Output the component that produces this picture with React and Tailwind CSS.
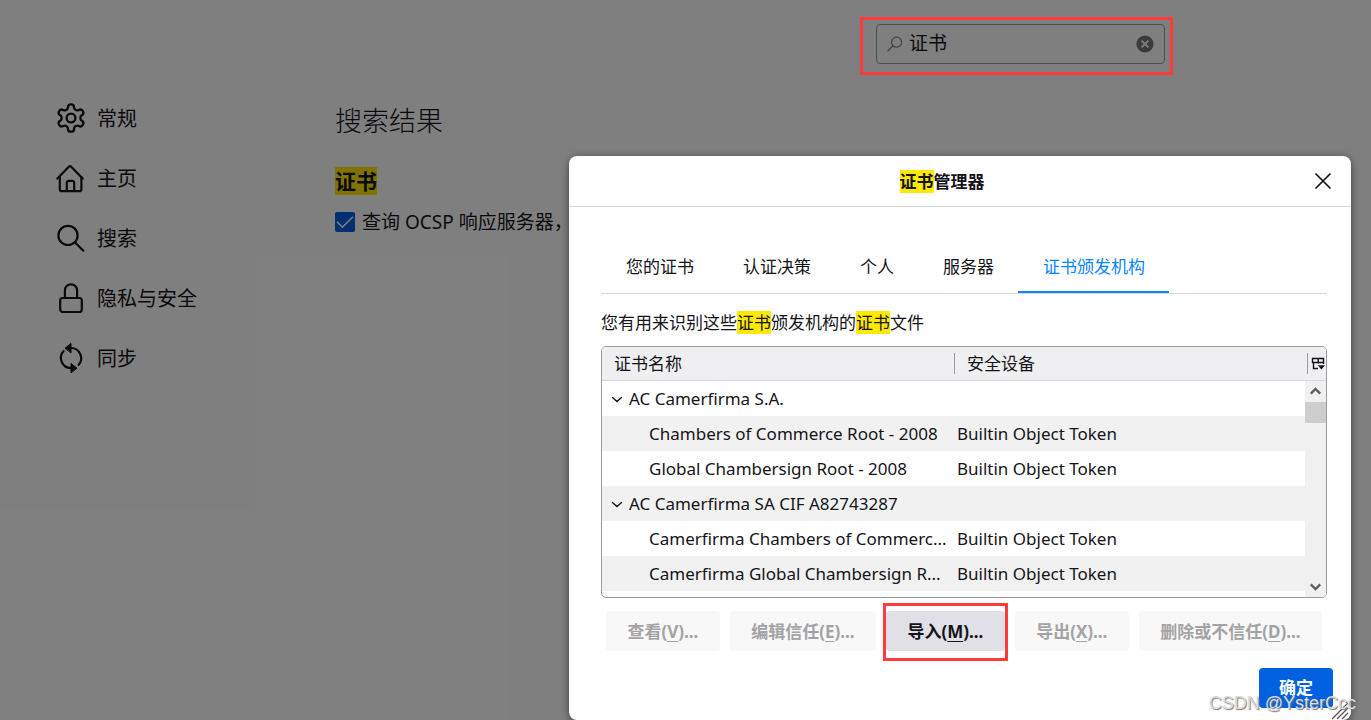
import React from "react";

const GearIcon = () => (
  <svg viewBox="1 1 22 22" className="size-[30px]" fill="none" stroke="currentColor" strokeWidth="1.7" strokeLinejoin="round">
    <path d="M12.22 2h-.44a2 2 0 0 0-2 2v.18a2 2 0 0 1-1 1.73l-.43.25a2 2 0 0 1-2 0l-.15-.08a2 2 0 0 0-2.73.73l-.22.38a2 2 0 0 0 .73 2.73l.15.1a2 2 0 0 1 1 1.72v.51a2 2 0 0 1-1 1.74l-.15.09a2 2 0 0 0-.73 2.73l.22.38a2 2 0 0 0 2.73.73l.15-.08a2 2 0 0 1 2 0l.43.25a2 2 0 0 1 1 1.73V20a2 2 0 0 0 2 2h.44a2 2 0 0 0 2-2v-.18a2 2 0 0 1 1-1.73l.43-.25a2 2 0 0 1 2 0l.15.08a2 2 0 0 0 2.73-.73l.22-.39a2 2 0 0 0-.73-2.73l-.15-.08a2 2 0 0 1-1-1.74v-.5a2 2 0 0 1 1-1.74l.15-.09a2 2 0 0 0 .73-2.73l-.22-.38a2 2 0 0 0-2.73-.73l-.15.08a2 2 0 0 1-2 0l-.43-.25a2 2 0 0 1-1-1.73V4a2 2 0 0 0-2-2z" />
    <circle cx="12" cy="12" r="3.2" />
  </svg>
);

const HomeIcon = () => (
  <svg viewBox="0 0 30 30" className="size-[30px]" fill="none" stroke="currentColor" strokeWidth="2.2" strokeLinecap="round" strokeLinejoin="round">
    <path d="M1.4 15.6 12.8 3.7a1.7 1.7 0 0 1 2.4 0l11.4 11.9" />
    <path d="M3.8 14v12.2a2 2 0 0 0 2 2h17.6a2 2 0 0 0 2-2V14" />
    <path d="M10.8 28v-8.2a2 2 0 0 1 2-2h3.4a2 2 0 0 1 2 2V28" />
  </svg>
);

const SearchIcon = () => (
  <svg viewBox="0 0 30 30" className="size-[30px]" fill="none" stroke="currentColor" strokeWidth="2.2" strokeLinecap="round">
    <circle cx="12" cy="12.4" r="9.6" />
    <path d="m18.9 19.3 8.4 8.4" />
  </svg>
);

const LockIcon = () => (
  <svg viewBox="0 0 30 30" className="size-[30px]" fill="none" stroke="currentColor" strokeWidth="2.2">
    <rect x="4.2" y="15" width="21.6" height="14" rx="2.4" />
    <path d="M8.9 15V7.4a6.1 6.1 0 0 1 12.2 0V15" />
  </svg>
);

const SyncIcon = () => (
  <svg viewBox="0 0 30 30" className="size-[30px]" fill="none" stroke="currentColor" strokeWidth="2.2" strokeLinecap="round">
    <path d="M15 5a10.2 10.2 0 0 1 7.6 16.9" />
    <path d="M15 25.2A10.2 10.2 0 0 1 7.6 8.1" />
    <path d="M9.3 5 15 .4v9.2zM20.7 25 15 20.4v9.2z" fill="currentColor" strokeWidth="1" strokeLinejoin="round" />
  </svg>
);

const categories = [
  { label: "常规", Icon: GearIcon },
  { label: "主页", Icon: HomeIcon },
  { label: "搜索", Icon: SearchIcon },
  { label: "隐私与安全", Icon: LockIcon },
  { label: "同步", Icon: SyncIcon },
];

const tabs = ["您的证书", "认证决策", "个人", "服务器", "证书颁发机构"];

const rows = [
  { group: true, name: "AC Camerfirma S.A." },
  { name: "Chambers of Commerce Root - 2008", device: "Builtin Object Token" },
  { name: "Global Chambersign Root - 2008", device: "Builtin Object Token" },
  { group: true, name: "AC Camerfirma SA CIF A82743287" },
  { name: "Camerfirma Chambers of Commerc...", device: "Builtin Object Token" },
  { name: "Camerfirma Global Chambersign R...", device: "Builtin Object Token" },
];

const actions = [
  { label: "查看", accessKey: "V" },
  { label: "编辑信任", accessKey: "E" },
  { label: "导入", accessKey: "M", enabled: true },
  { label: "导出", accessKey: "X" },
  { label: "删除或不信任", accessKey: "D" },
];

function Mark({ children }) {
  return <mark className="bg-[#ffe900] text-inherit">{children}</mark>;
}

function Settings() {
  return (
    <div>
      <header className="flex justify-end py-6 pr-[206px]">
        <div className="relative flex h-10 w-[289px] items-center rounded border border-[#9a9aa0] px-2.5">
          <svg viewBox="0 0 16 16" className="size-4 shrink-0 text-[#8a8a90]" fill="none" stroke="currentColor" strokeWidth="1.3" strokeLinecap="round">
            <circle cx="9.6" cy="6.2" r="5" />
            <path d="M6 9.8 1 14.8" />
          </svg>
          <input
            type="text"
            aria-label="搜索设置"
            defaultValue="证书"
            className="ml-1.5 min-w-0 flex-1 bg-transparent pb-0.5 text-[19px] leading-6 outline-none"
          />
          <button type="button" aria-label="清除" className="shrink-0">
            <svg viewBox="0 0 18 18" className="size-[18px]">
              <circle cx="9" cy="9" r="8.6" fill="#77777b" />
              <path d="m5.6 5.6 6.8 6.8m0-6.8-6.8 6.8" stroke="#fff" strokeWidth="1.8" />
            </svg>
          </button>
          <span className="pointer-events-none absolute -top-2 -right-[9px] -bottom-3 -left-[17px] z-20 border-3 border-[#ff3b3b]" />
        </div>
      </header>
      <div className="flex">
        <nav className="w-[335px] shrink-0 pl-14">
          {categories.map(({ label, Icon }) => (
            <a key={label} href="#" className="flex h-[60px] items-center gap-[11px] text-[20px]">
              <Icon />
              <span className="pt-0.5">{label}</span>
            </a>
          ))}
        </nav>
        <main className="min-w-0 flex-1 pt-[13px]">
          <h1 className="text-[27px] leading-10 font-light">搜索结果</h1>
          <h2 className="mt-[26px] text-[21px] leading-7 font-bold">
            <Mark>证书</Mark>
          </h2>
          <label className="mt-[13px] flex items-center gap-[7px] text-[19px] leading-7">
            <span className="grid">
              <input
                type="checkbox"
                defaultChecked
                className="col-start-1 row-start-1 size-5 appearance-none rounded-xs bg-[#0061e0]"
              />
              <svg viewBox="0 0 20 20" className="pointer-events-none col-start-1 row-start-1 size-5" fill="none" stroke="#fff" strokeWidth="1.5">
                <path d="m2 9.8 5.4 5.4L18 4.8" />
              </svg>
            </span>
            查询 OCSP 响应服务器，
          </label>
        </main>
      </div>
    </div>
  );
}

function CertificateTree() {
  return (
    <div className="mt-[11px] flex h-[252px] overflow-hidden rounded-[5px] border border-[#9b9b9e]">
      <div className="min-w-0 flex-1">
        <table className="w-full table-fixed border-separate border-spacing-0 text-left">
          <thead>
            <tr className="h-[34px] bg-[#efeff1]">
              <th className="w-[353px] border-b border-[#d7d7da] p-0 font-normal">
                <span className="flex h-[21px] items-center border-r border-[#9b9b9e] pl-3">证书名称</span>
              </th>
              <th className="border-b border-[#d7d7da] p-0 pl-3 font-normal">安全设备</th>
            </tr>
          </thead>
          <tbody>
            {rows.map((row) => (
              <tr key={row.name} className="h-[35px] even:bg-[#f1f1f1]">
                <td className="p-0">
                  {row.group ? (
                    <span className="flex items-center gap-1.5 pl-[9px] whitespace-nowrap">
                      <svg viewBox="0 0 12 12" className="size-3 shrink-0" fill="none" stroke="currentColor" strokeWidth="1.4" strokeLinecap="round">
                        <path d="m1.5 4.5 4.5 4 4.5-4" />
                      </svg>
                      {row.name}
                    </span>
                  ) : (
                    <span className="block truncate pl-[47px]">{row.name}</span>
                  )}
                </td>
                <td className="p-0 pl-0.5">{row.device}</td>
              </tr>
            ))}
          </tbody>
        </table>
      </div>
      <div className="flex w-[21px] shrink-0 flex-col">
        <div className="flex h-[34px] items-center border-b border-[#d7d7da] bg-[#efeff1] pl-0.5">
          <button type="button" aria-label="选择要显示的列" className="flex h-[21px] items-center border-l border-[#9b9b9e] pl-[3px]">
            <svg viewBox="0 0 14 14" className="size-3.5 shrink-0" fill="none" stroke="currentColor" strokeWidth="1.4">
              <path d="M1.5 6V1.5h11V7M1 5.5h12M7.2 1.5v5M2.5 5.5v6H7" />
              <path d="M6.8 8.3h7.2l-3.6 4.2z" fill="currentColor" stroke="none" />
            </svg>
          </button>
        </div>
        <div className="flex flex-1 flex-col items-center bg-[#f0f0f0]">
          <svg viewBox="0 0 21 21" className="size-[21px]" fill="none" stroke="#606060" strokeWidth="2.4">
            <path d="m5.8 12.6 4.7-4.7 4.7 4.7" />
          </svg>
          <div className="h-[21px] w-full bg-[#cdcdcd]" />
          <svg viewBox="0 0 21 21" className="mt-auto size-[21px]" fill="none" stroke="#606060" strokeWidth="2.4">
            <path d="m5.8 8.4 4.7 4.7 4.7-4.7" />
          </svg>
        </div>
      </div>
    </div>
  );
}

function CertificateManager() {
  return (
    <section
      role="dialog"
      aria-labelledby="dialog-title"
      className="relative min-w-0 flex-1 self-start rounded-lg bg-white text-[17px] leading-6 shadow-[0_2px_8px_rgba(0,0,0,0.5)]"
    >
      <header className="flex h-[51px] items-center border-b border-[#d7d7da] pr-4">
        <h2 id="dialog-title" className="flex-1 pt-0.5 pl-1 text-center font-bold">
          <Mark>证书</Mark>管理器
        </h2>
        <button type="button" aria-label="关闭" className="p-1">
          <svg viewBox="0 0 16 16" className="size-4" fill="none" stroke="currentColor" strokeWidth="1.7" strokeLinecap="round">
            <path d="m1 1 14 14M15 1 1 15" />
          </svg>
        </button>
      </header>
      <div className="pt-[34px] pr-6 pl-8">
        <div role="tablist" className="flex border-b border-[#d7d7da]">
          {tabs.map((tab, i) => (
            <button
              key={tab}
              type="button"
              role="tab"
              aria-selected={i === 4}
              className="h-[52px] border-b-2 border-transparent pt-0.5 pr-6 pl-[25px] whitespace-nowrap aria-selected:border-[#0a84ff] aria-selected:text-[#0a84ff]"
            >
              {tab}
            </button>
          ))}
        </div>
        <p className="mt-[17px]">
          您有用来识别这些<Mark>证书</Mark>颁发机构的<Mark>证书</Mark>文件
        </p>
        <CertificateTree />
        <div className="mx-[5px] mt-[13px] flex gap-2.5 font-bold">
          {actions.map(({ label, accessKey, enabled }) => (
            <button
              key={label}
              type="button"
              disabled={!enabled}
              className="relative h-10 flex-auto rounded bg-[#e0e0e6] pt-0.5 whitespace-nowrap disabled:bg-[#f8f8f8] disabled:text-[#a3a3a5]"
            >
              {label}(<span className="underline underline-offset-3">{accessKey}</span>)...
              {enabled && (
                <span className="pointer-events-none absolute -top-2 -right-[3px] -bottom-2.5 -left-[3px] border-3 border-[#ff3b3b]" />
              )}
            </button>
          ))}
        </div>
      </div>
      <footer className="flex justify-end pt-[17px] pr-[18px] pb-3">
        <button type="button" className="h-10 rounded bg-[#0061e0] px-5 font-bold text-white">
          确定
        </button>
      </footer>
      <svg viewBox="0 0 20 20" className="absolute right-0 bottom-0 size-5" stroke="#555" strokeWidth="1.3">
        <path d="M1 19 17 3M6 19 17 8M11 19l6-6" />
      </svg>
    </section>
  );
}

export default function App() {
  return (
    <div className="relative min-h-screen overflow-hidden bg-white font-['Noto_Sans','Noto_Sans_CJK_SC',sans-serif] text-[#15141a]">
      <Settings />
      <div className="absolute inset-0 z-10 flex bg-black/50 pt-[156px] pr-5 pl-[569px]">
        <CertificateManager />
      </div>
      <p className="pointer-events-none absolute right-[15px] bottom-[5px] z-30 font-['Liberation_Sans',sans-serif] text-[18px] leading-6 text-[#dcdcdc] [text-shadow:1px_1px_1px_#777]">
        CSDN @YsterCcc
      </p>
    </div>
  );
}
